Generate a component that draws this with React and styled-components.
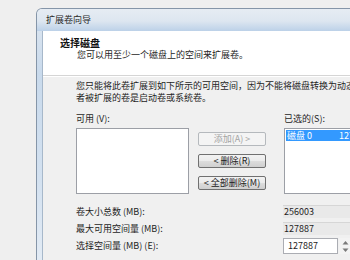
import styled, { createGlobalStyle } from "styled-components"

const GlobalStyle = createGlobalStyle`
  html, body {
    margin: 0;
    padding: 0;
    background: #efefef;
    width: 350px;
    height: 260px;
    overflow: hidden;
  }
  body {
    font-family: "Noto Sans CJK SC", "Liberation Sans", sans-serif;
    font-size: 9px;
    color: #1e1e1e;
  }
`

export default function App() {
  return (
    <>
      <GlobalStyle />
      <Desk>
        <Window>
          <TitleBar>扩展卷向导</TitleBar>
          <Client>
            <Header>
              <HeaderTitle>选择磁盘</HeaderTitle>
              <HeaderSub>您可以用至少一个磁盘上的空间来扩展卷。</HeaderSub>
            </Header>
            <Body>
              <Note>
                您只能将此卷扩展到如下所示的可用空间，因为不能将磁盘转换为动态磁盘，或
                <br />
                者被扩展的卷是启动卷或系统卷。
              </Note>
              <Lists>
                <Column>
                  <Label>可用 (V):</Label>
                  <ListBox width={113} />
                </Column>
                <Buttons>
                  <Button disabled>添加(A) &gt;</Button>
                  <Button>&lt; 删除(R)</Button>
                  <Button>&lt; 全部删除(M)</Button>
                </Buttons>
                <Column>
                  <Label>已选的(S):</Label>
                  <ListBox width={110}>
                    <Row selected>
                      <span>磁盘 0</span>
                      <span>127887 MB</span>
                    </Row>
                  </ListBox>
                </Column>
              </Lists>
              <Fields>
                <Label>卷大小总数 (MB):</Label>
                <ReadOnly>256003</ReadOnly>
                <Label>最大可用空间量 (MB):</Label>
                <ReadOnly>127887</ReadOnly>
                <Label>选择空间量 (MB) (E):</Label>
                <Spin>
                  <SpinInput>127887</SpinInput>
                  <SpinArrows>
                    <svg width="7" height="5" viewBox="0 0 7 5">
                      <path d="M0.5 4.5 L3.5 1 L6.5 4.5 Z" fill="#7a7a7a" />
                    </svg>
                    <svg width="7" height="5" viewBox="0 0 7 5">
                      <path d="M0.5 0.5 L3.5 4 L6.5 0.5 Z" fill="#7a7a7a" />
                    </svg>
                  </SpinArrows>
                </Spin>
              </Fields>
            </Body>
          </Client>
        </Window>
      </Desk>
    </>
  )
}

const Desk = styled.div`
  padding: 8px 0 0 36px;
  height: 260px;
  box-sizing: border-box;
`

const Window = styled.div`
  width: 340px;
  height: 260px;
  border: 1px solid #8595a8;
  border-bottom: none;
  border-radius: 6px 6px 0 0;
  background: linear-gradient(to bottom, #dfe7f0 0%, #c9daec 25%, #d3e1f0 65%, #e4ecf5 100%);
  display: flex;
  flex-direction: column;
  overflow: hidden;
`

const TitleBar = styled.div`
  height: 22px;
  line-height: 22px;
  padding-left: 9px;
  color: #2a2a2a;
  background: linear-gradient(to bottom, #e6ecf3 0%, #dde6f0 55%, #bcd1e8 100%);
`

const Client = styled.div`
  flex: 1;
  margin-left: 5px;
  border-left: 1px solid #a7b8ca;
  background: #f0f0f0;
  display: flex;
  flex-direction: column;
`

const Header = styled.div`
  height: 45px;
  box-sizing: border-box;
  background: #fff;
  padding: 6px 0 0 17px;
  border-bottom: 1px solid #d5d5d5;
`

const HeaderTitle = styled.div`
  font-weight: 700;
  font-size: 10px;
  line-height: 12px;
  color: #111;
`

const HeaderSub = styled.div`
  line-height: 11px;
  padding-left: 17px;
`

const Body = styled.div`
  border-top: 1px solid #fff;
  padding: 3px 0 0 33px;
  display: flex;
  flex-direction: column;
`

const Note = styled.div`
  line-height: 12px;
  white-space: nowrap;
`

const Lists = styled.div`
  display: flex;
  margin-top: 9px;
`

const Column = styled.div`
  display: flex;
  flex-direction: column;
  gap: 3px;
`

const Label = styled.div`
  line-height: 12px;
  white-space: nowrap;
`

const ListBox = styled.div`
  width: ${(p) => p.width}px;
  height: 66px;
  box-sizing: border-box;
  background: #fff;
  border: 1px solid #9c9fa6;
  padding: 1px;
`

const Row = styled.div`
  display: flex;
  height: 11px;
  line-height: 11px;
  padding-left: 1px;
  background: ${(p) => (p.selected ? "#3399ff" : "transparent")};
  color: ${(p) => (p.selected ? "#fff" : "#222")};
  white-space: nowrap;

  span:first-child {
    width: 52px;
  }
`

const Buttons = styled.div`
  display: flex;
  flex-direction: column;
  gap: 8px;
  margin: 19px 18px 0 9px;
`

const Button = styled.button`
  width: 68px;
  height: 14px;
  padding: 0;
  font: inherit;
  font-size: 9px;
  line-height: 12px;
  border-radius: 2px;
  border: 1px solid ${(p) => (p.disabled ? "#b5b9bd" : "#707070")};
  color: ${(p) => (p.disabled ? "#a3a3a3" : "#222")};
  background: ${(p) =>
    p.disabled
      ? "#f4f4f4"
      : "linear-gradient(to bottom, #f2f2f2 0%, #ebebeb 50%, #dddddd 51%, #cfcfcf 100%)"};
  white-space: nowrap;
`

const Fields = styled.div`
  display: grid;
  grid-template-columns: 207px 1fr;
  grid-auto-rows: 17px;
  align-items: center;
  margin-top: 9px;
`

const ReadOnly = styled.div`
  height: 12px;
  line-height: 12px;
  padding-left: 1px;
  background: #e9e9e9;
  border-top: 1px solid #d6d6d6;
`

const Spin = styled.div`
  display: flex;
  height: 16px;
  margin-top: 1px;
`

const SpinInput = styled.div`
  width: 55px;
  box-sizing: border-box;
  background: #fff;
  border: 1px solid #abadb3;
  line-height: 14px;
  padding-left: 4px;
`

const SpinArrows = styled.div`
  width: 12px;
  display: flex;
  flex-direction: column;
  justify-content: space-around;
  align-items: center;
  margin-left: 1px;
  background: #f3f3f3;
`
